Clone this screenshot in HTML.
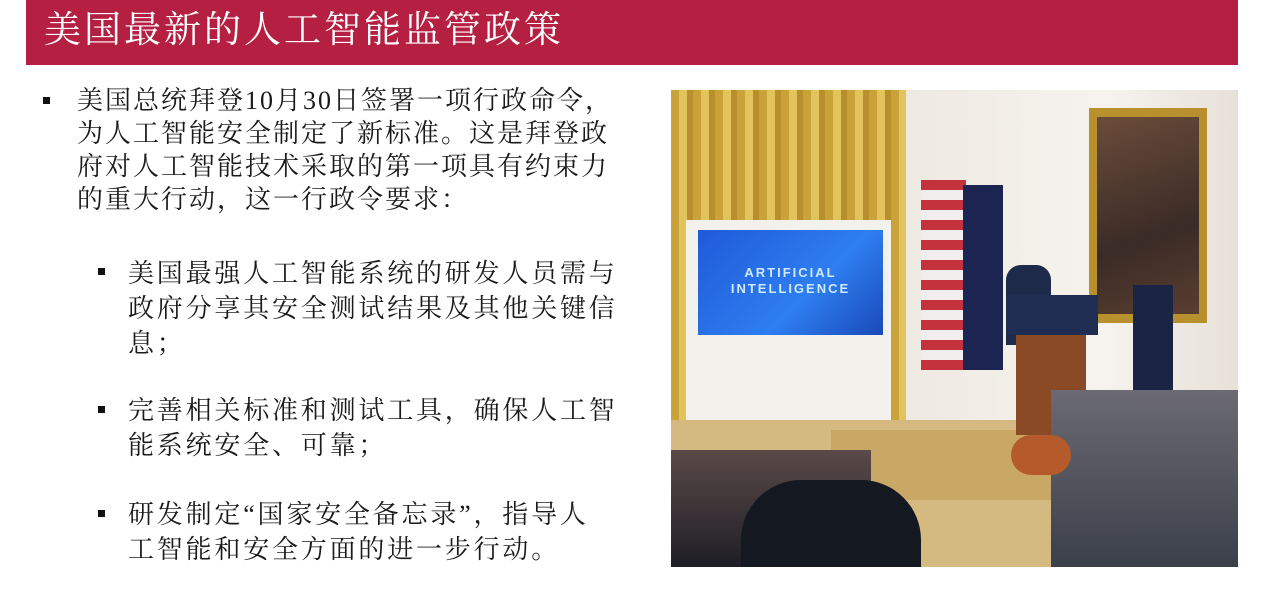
<!DOCTYPE html>
<html><head><meta charset="utf-8"><style>
body{margin:0;width:1280px;height:605px;background:#fff;position:relative;overflow:hidden;font-family:"Liberation Serif","Noto Serif CJK SC",serif;color:#1a1a1a}
.hdr{position:absolute;left:26px;top:0;width:1212px;height:65px;background:#b52042}
.hdr span{position:absolute;left:18px;top:11px;font-size:37px;color:#fff;letter-spacing:3px;line-height:40px}
.t{position:absolute;font-size:26px;line-height:33px;letter-spacing:2px;white-space:nowrap}
.s{font-size:26px;letter-spacing:2.8px}
.b{position:absolute;width:7px;height:7px;background:#111}
.ph{position:absolute;left:671px;top:90px;width:567px;height:477px;overflow:hidden;background:#e8e4dc}
.ph div{position:absolute}
</style></head><body>
<div class="hdr"><span>美国最新的人工智能监管政策</span></div>
<div class="b" style="left:43px;top:97px"></div>
<div class="t" style="left:77px;top:84px">美国总统拜登10月30日签署一项行政命令，<br>为人工智能安全制定了新标准。这是拜登政<br>府对人工智能技术采取的第一项具有约束力<br>的重大行动，这一行政令要求：</div>
<div class="b" style="left:98px;top:268px"></div>
<div class="t s" style="left:128px;top:256px;line-height:35px">美国最强人工智能系统的研发人员需与<br>政府分享其安全测试结果及其他关键信<br>息；</div>
<div class="b" style="left:98px;top:406px"></div>
<div class="t s" style="left:128px;top:393px;line-height:35px">完善相关标准和测试工具，确保人工智<br>能系统安全、可靠；</div>
<div class="b" style="left:98px;top:510px"></div>
<div class="t s" style="left:128px;top:497px;line-height:35px">研发制定“国家安全备忘录”，指导人<br>工智能和安全方面的进一步行动。</div>
<div class="ph">
 <div style="left:0;top:0;width:235px;height:340px;background:repeating-linear-gradient(90deg,#c9a23a 0 8px,#e2c35c 8px 16px,#b88f2c 16px 22px)"></div>
 <div style="left:235px;top:0;width:332px;height:330px;background:linear-gradient(90deg,#eeeae2,#f6f3ee 60%,#e6e1d8)"></div>
 <div style="left:418px;top:18px;width:118px;height:215px;background:#b8902e"></div>
 <div style="left:426px;top:27px;width:102px;height:197px;background:linear-gradient(160deg,#6b4c3a,#3a2b26 60%,#5a3e30)"></div>
 <div style="left:15px;top:130px;width:205px;height:220px;background:#f3f1ec"></div>
 <div style="left:27px;top:140px;width:185px;height:105px;background:linear-gradient(135deg,#1f5ad8,#2e7ef0 60%,#1a49b8)"></div>
 <div style="left:27px;top:175px;width:185px;text-align:center;color:#cfeaff;font:bold 13px 'Liberation Sans',sans-serif;letter-spacing:2px;line-height:16px">ARTIFICIAL<br>INTELLIGENCE</div>
 <div style="left:250px;top:90px;width:45px;height:190px;background:repeating-linear-gradient(0deg,#c4323e 0 10px,#f2eeee 10px 20px)"></div>
 <div style="left:292px;top:95px;width:40px;height:185px;background:#1c2452"></div>
 <div style="left:0;top:330px;width:567px;height:147px;background:#d4b981"></div>
 <div style="left:160px;top:340px;width:250px;height:70px;background:#c9a865"></div>
 <div style="left:335px;top:175px;width:45px;height:80px;background:#1d2a4a;border-radius:15px 15px 0 0"></div>
 <div style="left:335px;top:205px;width:92px;height:40px;background:#1f2d52"></div>
 <div style="left:345px;top:245px;width:70px;height:100px;background:#8a4a26"></div>
 <div style="left:462px;top:195px;width:40px;height:115px;background:#1a2444"></div>
 <div style="left:0;top:360px;width:200px;height:117px;background:linear-gradient(180deg,#5a4a48,#1e1e26)"></div>
 <div style="left:70px;top:390px;width:180px;height:90px;background:#141820;border-radius:60px 60px 0 0"></div>
 <div style="left:380px;top:300px;width:187px;height:177px;background:linear-gradient(180deg,#6b6a72,#3b3f4a)"></div>
 <div style="left:340px;top:345px;width:60px;height:40px;background:#b55a2a;border-radius:20px"></div>
</div>
</body></html>
